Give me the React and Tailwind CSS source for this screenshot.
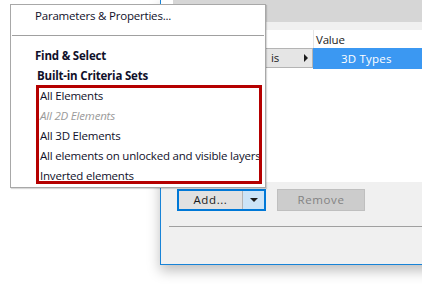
import React from 'react';

const font = { fontFamily: '"Open Sans", "Noto Sans", Arial, sans-serif' };

const criteria = [
    { label: 'All Elements' },
    { label: 'All 2D Elements', disabled: true },
    { label: 'All 3D Elements' },
    { label: 'All elements on unlocked and visible layers' },
    { label: 'Inverted elements' },
];

const DialogBehind = () => (
    <div className="absolute left-[160px] top-[-1px] w-[280px] h-[266px] border-l border-b border-[#1883d7] bg-[#f0f0f0] shadow-[0_6px_12px_rgba(0,0,0,0.25)] flex flex-col text-[11.5px] tracking-[-0.2px]">
        <div className="h-[23px] flex">
            <div className="w-[12px] bg-white" />
            <div className="flex-1 bg-[#d6d6d6]" />
        </div>
        <div className="h-[8px] bg-[#f0f0f0]" />
        <div className="h-[152px] bg-white flex flex-col">
            <div className="h-[18px] flex text-[#1b1b1b]">
                <div className="w-[152px]" />
                <div className="flex-1 border-l border-[#e5e5e5] pl-[2px] leading-[19px]">Value</div>
            </div>
            <div className="h-[21px] flex">
                <div className="w-[104px]" />
                <div className="w-[48px] h-[20px] bg-[#e5e5e5] border border-[#b4b4b4] flex items-center justify-between pl-[5px] pr-[4px] text-[#1b1b1b]">
                    <span>is</span>
                    <span className="w-0 h-0 border-y-[4px] border-y-transparent border-l-[4px] border-l-[#1b1b1b]" />
                </div>
                <div className="flex-1 bg-[#3b98f2] text-white leading-[21px] pl-[28px] tracking-[0.2px]">3D Types</div>
            </div>
        </div>
        <div className="flex-1 flex flex-col">
            <div className="flex gap-[11px] pl-[16px] pt-[7px]">
                <div className="w-[89px] h-[22px] border-2 border-[#0078d7] flex">
                    <div className="flex-1 bg-[#e1e1e1] border-r border-[#b4b4b4] text-[#1b1b1b] flex items-center justify-center tracking-[0.6px]">Add...</div>
                    <div className="w-[21px] bg-[#cce4f7] flex items-center justify-center">
                        <span className="w-0 h-0 border-x-[4px] border-x-transparent border-t-[4px] border-t-[#1b1b1b]" />
                    </div>
                </div>
                <div className="w-[88px] h-[22px] bg-[#cccccc] border border-[#bfbfbf] text-[#838383] flex items-center justify-center tracking-[0.6px]">Remove</div>
            </div>
            <div className="mt-[15px] ml-[8px] h-[1px] bg-[#a0a0a0]" />
        </div>
    </div>
);

const Menu = () => (
    <div className="absolute left-[10px] top-[4px] w-[256px] h-[184px] bg-white border border-[#a8a8a8] shadow-[1px_1px_1px_rgba(0,0,0,0.15)] text-[11.5px] tracking-[-0.2px] text-[#10102a] leading-[20px]">
        <div className="relative flex flex-col">
            <div className="h-[20px] pl-[24px] mt-[1px]">Parameters &amp; Properties...</div>
            <div className="mx-[1px] h-[1px] bg-[#a0a0a0] mt-[9px]" />
            <div className="h-[20px] pl-[24px] mt-[10px] font-bold">Find &amp; Select</div>
            <div className="h-[20px] pl-[26px] font-bold">Built-in Criteria Sets</div>
            {criteria.map(item => (
                <div
                    key={item.label}
                    className={`h-[20px] pl-[29px] whitespace-nowrap ${item.disabled ? 'italic text-[#9a9a9a]' : ''}`}
                >
                    {item.label}
                </div>
            ))}
            <div className="absolute left-[25px] top-[80px] w-[226px] h-[99px] border-[3px] border-[#b50000]" />
        </div>
    </div>
);

export default function App() {
    return (
        <div className="relative w-[422px] h-[284px] bg-white overflow-hidden" style={font}>
            <DialogBehind />
            <Menu />
        </div>
    );
}
